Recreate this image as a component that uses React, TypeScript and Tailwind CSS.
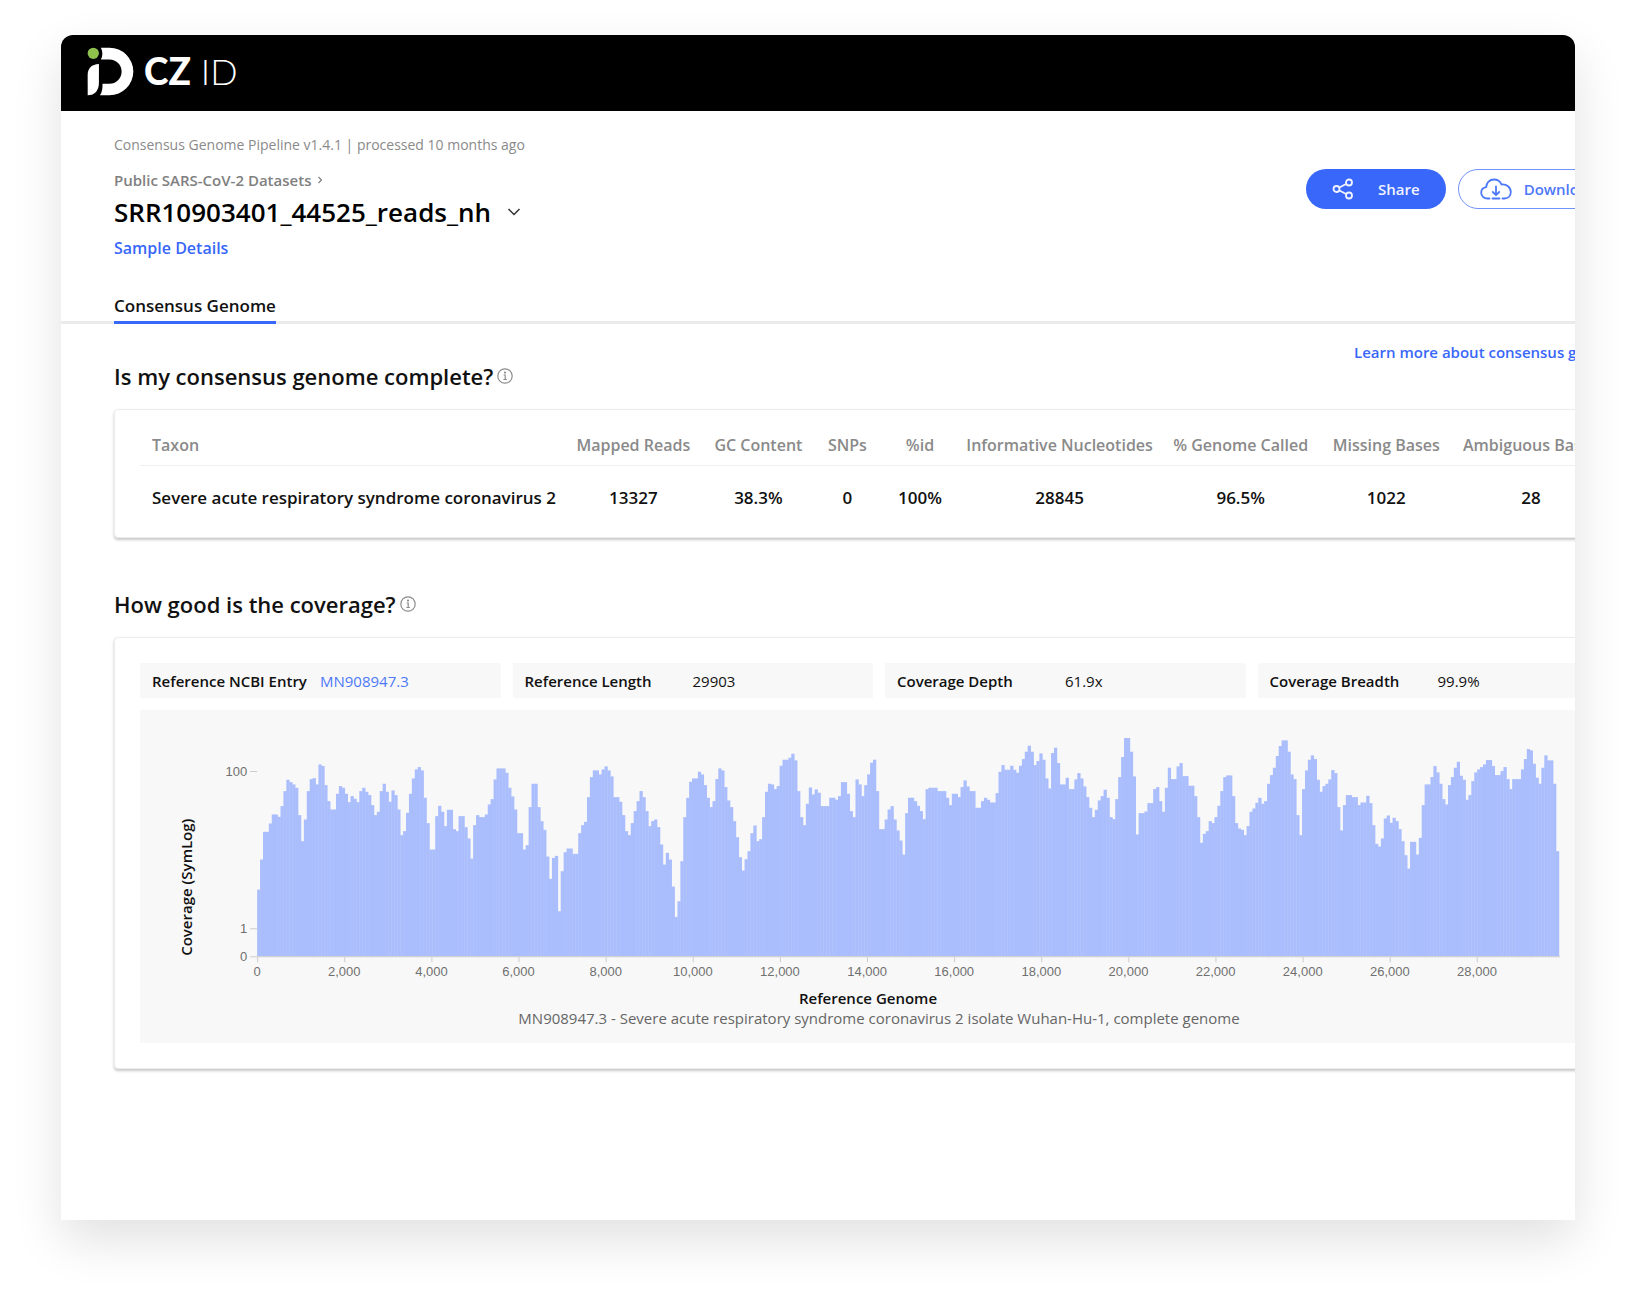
import React from "react";

type Step = [number, number];

const BASELINE = 765;

// Coverage profile, stored in stretches: [x where a level starts, y of that level].
const stretches: { origin: number; steps: Step[] }[] = [
  {
    origin: -264,
    steps: [
      [264, 565], [272, 475], [280, 392], [297, 380], [303, 367], [312, 340], [321, 347], [331, 335], [335, 315],
      [342, 270], [350, 236], [362, 243], [369, 250], [378, 260], [388, 342], [397, 420], [406, 355], [414, 270],
      [422, 234], [430, 231], [438, 250], [446, 210], [452, 190], [459, 195], [467, 252], [475, 300], [484, 325],
      [498, 278], [507, 255], [516, 260], [524, 278], [532, 303], [546, 285], [553, 293], [560, 303], [570, 270],
      [578, 260], [588, 272], [595, 282], [606, 312], [615, 342], [625, 332], [633, 270], [640, 248], [649, 272],
      [656, 302], [668, 268], [676, 282], [686, 325], [693, 402], [704, 390], [710, 335], [717, 278], [726, 232],
      [734, 205], [742, 198], [750, 208], [759, 248], [766, 290], [773, 366], [781, 445], [797, 345], [804, 314],
      [811, 332], [820, 360], [828, 375], [836, 326], [850, 384], [860, 390], [866, 345], [882, 378], [891, 412],
      [898, 472], [912, 372], [920, 342], [930, 348], [946, 340], [952, 310], [960, 294], [968, 278], [975, 235],
      [984, 202], [1006, 215], [1014, 260], [1022, 286], [1032, 325], [1038, 366], [1046, 396],
    ],
  },
  {
    origin: 786,
    steps: [
      [11, 445], [18, 432], [27, 318], [34, 248], [41, 226], [49, 248], [57, 318], [66, 360], [73, 386], [81, 466],
      [89, 533], [97, 470], [103, 464], [111, 515], [118, 630], [127, 510], [136, 453], [144, 442], [160, 458],
      [174, 396], [182, 372], [191, 362], [198, 348], [206, 288], [213, 228], [222, 208], [236, 220], [246, 205],
      [253, 196], [262, 208], [276, 226], [285, 288], [294, 302], [307, 342], [315, 390], [323, 402], [337, 366],
      [345, 330], [355, 300], [361, 270], [370, 288], [378, 330], [385, 375], [396, 360], [403, 355], [411, 378],
      [417, 430], [426, 490], [434, 468], [440, 455], [448, 475], [458, 556], [464, 647], [473, 600], [479, 480],
      [487, 408], [495, 348], [502, 290], [510, 242], [518, 232], [534, 212], [542, 220], [548, 240], [556, 252],
      [564, 290], [572, 318], [582, 300], [588, 234], [596, 202], [602, 208], [611, 258], [620, 298], [627, 318],
      [636, 340], [643, 360], [650, 408], [658, 468], [668, 508], [675, 474], [683, 450], [690, 396], [698, 373],
      [706, 384], [713, 420], [722, 414], [729, 348], [738, 272], [745, 248], [753, 250], [761, 264], [770, 255],
      [777, 240], [783, 194], [790, 176], [805, 170], [812, 158], [824, 178], [831, 270], [838, 348], [848, 372],
      [855, 308], [863, 259], [877, 280], [885, 265], [892, 275], [901, 315], [930, 290], [945, 296], [952, 285],
      [960, 262], [966, 243], [977, 278], [986, 330], [995, 348], [1003, 276], [1010, 235], [1018, 250],
      [1025, 285], [1034, 252], [1042, 220], [1049, 185],
    ],
  },
  {
    origin: 1836,
    steps: [
      [7, 176], [14, 194], [22, 270], [30, 384], [45, 355], [53, 325], [61, 315], [69, 355], [76, 388], [85, 398],
      [92, 418], [99, 460], [108, 336], [116, 290], [131, 300], [140, 314], [148, 330], [155, 354], [164, 300],
      [170, 264], [177, 260], [205, 270], [225, 290], [234, 312], [247, 278], [264, 288], [271, 258], [278, 238],
      [287, 256], [295, 270], [311, 290], [318, 320], [334, 300], [342, 290], [353, 296], [362, 304], [372, 300],
      [380, 276], [388, 212], [397, 192], [405, 206], [418, 194], [426, 206], [436, 215], [445, 194], [452, 174],
      [465, 152], [474, 134], [483, 152], [490, 192], [498, 180], [505, 157], [513, 176], [521, 232], [530, 262],
      [543, 156], [552, 140], [560, 186], [567, 250], [582, 230], [599, 264], [614, 235], [622, 216], [631, 232],
      [638, 256], [648, 288], [655, 320], [663, 348], [678, 326], [685, 298], [693, 285], [701, 266], [708, 290],
      [717, 348], [726, 354], [734, 294], [740, 228], [748, 168], [757, 144], [763, 111], [777, 152], [786, 226],
      [794, 296], [800, 400], [809, 336], [820, 331], [834, 306], [846, 290], [852, 264], [859, 258], [864, 300],
      [871, 332], [881, 260], [888, 200], [903, 234], [918, 196], [926, 186], [940, 225], [950, 254], [970, 264],
      [975, 285], [982, 348], [990, 425], [998, 398], [1008, 390], [1013, 360], [1022, 366], [1030, 348],
      [1043, 314],
    ],
  },
  {
    origin: 2886,
    steps: [
      [2, 270], [9, 228], [18, 223], [33, 285], [40, 366], [49, 382], [57, 376], [65, 386], [73, 402], [80, 375],
      [87, 332], [97, 322], [103, 305], [111, 290], [119, 308], [127, 300], [140, 248], [150, 222], [156, 200],
      [165, 165], [174, 135], [182, 118], [198, 152], [206, 190], [213, 220], [222, 234], [229, 342], [237, 402],
      [245, 264], [252, 208], [260, 176], [268, 163], [276, 174], [284, 200], [292, 236], [300, 272], [308, 255],
      [317, 248], [326, 235], [332, 207], [340, 216], [346, 256], [353, 318], [361, 388], [370, 312], [378, 282],
      [394, 288], [408, 312], [423, 304], [434, 292], [440, 284], [448, 306], [455, 372], [462, 428], [472, 436],
      [479, 412], [486, 352], [495, 343], [503, 365], [514, 350], [526, 360], [534, 384], [542, 420], [550, 462],
      [557, 502], [570, 422], [588, 460], [596, 410], [602, 312], [611, 250], [626, 228], [634, 195], [650, 214],
      [658, 248], [666, 294], [674, 310], [682, 252], [690, 228], [698, 200], [705, 182], [719, 224], [729, 236],
      [737, 296], [746, 282], [754, 240], [761, 214], [770, 205], [778, 198], [790, 190], [798, 177], [812, 195],
      [822, 222], [838, 210], [848, 198], [860, 234], [868, 264], [877, 234], [900, 205], [908, 174], [914, 144],
      [923, 139], [930, 148], [938, 188], [946, 230], [954, 248], [962, 200], [970, 163], [983, 178], [998, 248],
      [1008, 450],
    ],
  },
];

const profile: Step[] = stretches.flatMap(({ origin, steps }) =>
  steps.map(([x, y]): Step => [x + origin, BASELINE - y]),
);

const BAR_COUNT = 446;
const PLOT_UNITS = 3900;
const BAR = PLOT_UNITS / BAR_COUNT;

const bars = Array.from({ length: BAR_COUNT }, (_, i) => {
  const middle = (i + 0.5) * BAR;
  let height = profile[0][1];
  for (const [x, h] of profile) {
    if (x > middle) break;
    height = h;
  }
  return { x: i * BAR, height };
});

const columns: { name: string; value: string; width: string }[] = [
  { name: "Mapped Reads", value: "13327", width: "w-[136px]" },
  { name: "GC Content", value: "38.3%", width: "w-[114px]" },
  { name: "SNPs", value: "0", width: "w-[64px]" },
  { name: "%id", value: "100%", width: "w-[81px]" },
  { name: "Informative Nucleotides", value: "28845", width: "w-[198px]" },
  { name: "% Genome Called", value: "96.5%", width: "w-[164px]" },
  { name: "Missing Bases", value: "1022", width: "w-[127px]" },
  { name: "Ambiguous Bases", value: "28", width: "w-[168px] pr-1.5" },
];

function Logo() {
  return (
    <a href="#home" aria-label="CZ ID" className="flex items-center text-white">
      <svg viewBox="22 22 142 148" className="h-[49px] w-[47px]" aria-hidden="true">
        <circle cx="41" cy="41" r="17" fill="#8fc24d" />
        <path d="M24 168V106C24 86 36 74 58 73V130C58 153 46 168 24 168Z" fill="#fff" />
        <path
          d="M64 24H90A72 72 0 0 1 90 168H61C67 160 69 149 69 133H90A36.500 36.500 0 0 0 90 60H64C70 49 70 35 64 24Z"
          fill="#fff"
        />
      </svg>
      <span className="ml-2.5 font-['Lato',sans-serif] text-[37px] leading-10 font-black">CZ</span>
      <span className="ml-2.5 font-['Lato',sans-serif] text-[36px] leading-10 font-light">ID</span>
    </a>
  );
}

function ShareIcon() {
  return (
    <svg viewBox="0 0 22 22" className="size-[22px]" fill="none" stroke="currentColor" strokeWidth="1.8" aria-hidden="true">
      <circle cx="4.500" cy="11" r="3" />
      <circle cx="17" cy="4.500" r="3" />
      <circle cx="17" cy="17.500" r="3" />
      <path d="M7.400 9.500L14.100 6M7.400 12.500L14.100 16" />
    </svg>
  );
}

function CloudDownloadIcon() {
  return (
    <svg
      viewBox="0 0 32 22"
      className="h-[22px] w-8"
      fill="none"
      stroke="currentColor"
      strokeWidth="1.8"
      strokeLinecap="round"
      strokeLinejoin="round"
      aria-hidden="true"
    >
      <path d="M9.500 20.500H7.500C3.800 20.500 1.200 18 1.200 14.800C1.200 11.800 3.200 9.600 6.200 9.200C6.400 4.700 9.600 1.500 14 1.500C17.500 1.500 20.300 3.400 21.500 6.500C26.500 5.800 30.800 9.400 30.800 14C30.800 17.800 28.200 20.500 24.500 20.500H22.500" />
      <path d="M16 8.500V17M12.800 14L16 17.200L19.200 14M12.500 20.500H19.500" />
    </svg>
  );
}

function InfoIcon() {
  return (
    <svg viewBox="0 0 16 16" className="size-4 text-[#8c8c8c]" fill="none" stroke="currentColor" strokeWidth="1.2" aria-hidden="true">
      <circle cx="8" cy="8" r="7.200" />
      <path d="M6.600 7H8.200V11.500M6.400 11.500H9.900" />
      <circle cx="8" cy="4.600" r="0.500" fill="currentColor" />
    </svg>
  );
}

function SectionTitle({ children, id }: { children: React.ReactNode; id: string }) {
  return (
    <div className="flex items-center gap-1">
      <h2 id={id} className="text-[22px] leading-7 font-semibold">{children}</h2>
      <button type="button" aria-label="More information">
        <InfoIcon />
      </button>
    </div>
  );
}

function Stat({ label, children }: { label: string; children: React.ReactNode }) {
  return (
    <div className="flex h-[35px] items-center bg-[#f8f8f8] px-3 text-[15px] leading-5">
      <dt className="w-[168px] font-semibold">{label}</dt>
      <dd>{children}</dd>
    </div>
  );
}

function CoverageChart() {
  const ticks = Array.from({ length: 15 }, (_, i) => i * 2000);
  return (
    <svg viewBox="0 0 1476 278" className="block w-full" role="img" aria-label="Coverage of the reference genome">
      <g transform="translate(117 246) scale(0.33333)" fill="#aabdfc">
        {bars.map((bar) => (
          <rect key={bar.x} x={bar.x} y={-bar.height} width={BAR + 1} height={bar.height} />
        ))}
      </g>
      <g stroke="#cccccc">
        <path d="M117 246.500H1418M110 61.500H117M110 218.500H117M110 246.500H117" fill="none" />
        {ticks.map((t) => (
          <path key={t} d={`M${Math.round(117 + (t * 1301) / 29903) + 0.5} 247V252`} />
        ))}
      </g>
      <g className="font-['Liberation_Sans',sans-serif] text-[13px]" fill="#707070">
        <text x="107" y="66" textAnchor="end">100</text>
        <text x="107" y="223" textAnchor="end">1</text>
        <text x="107" y="251" textAnchor="end">0</text>
        {ticks.map((t) => (
          <text key={t} x={117 + (t * 1301) / 29903} y="266" textAnchor="middle">
            {t.toLocaleString("en-US")}
          </text>
        ))}
      </g>
      <text transform="translate(52 177) rotate(-90)" textAnchor="middle" className="text-[15px] font-semibold" fill="#111">
        Coverage (SymLog)
      </text>
    </svg>
  );
}

const card =
  "mt-[19px] rounded-[4px] border border-[#ececec] bg-white px-[25px] shadow-[0_2px_3px_rgba(0,0,0,0.22)]";

export default function App() {
  return (
    <div className="min-h-screen bg-white px-[61px] pt-[35px] pb-[87px] font-['Open_Sans',sans-serif] text-[#111]">
      <div className="overflow-hidden rounded-t-xl bg-white shadow-[0_20px_50px_rgba(0,0,0,0.12)]">
        <header className="flex h-[76px] items-center bg-black px-[26px] pb-1">
          <Logo />
        </header>

        <main>
          <div className="-mr-[69px] flex items-start justify-between pt-6 pl-[53px]">
            <div>
              <p className="text-[14px] leading-5 text-[#8a8a8a]">
                Consensus Genome Pipeline v1.4.1 | processed 10 months ago
              </p>
              <a href="#datasets" className="mt-[15px] flex items-center gap-1.5 text-[15px] leading-5 font-semibold text-[#808080]">
                Public SARS-CoV-2 Datasets
                <svg viewBox="0 0 6 8" className="h-2 w-1.5" fill="none" stroke="currentColor" strokeWidth="1.2" aria-hidden="true">
                  <path d="M1.500 1L4.500 4L1.500 7" />
                </svg>
              </a>
              <div className="mt-1 flex items-center gap-4">
                <h1 className="text-[26px] leading-9 font-semibold text-black">SRR10903401_44525_reads_nh</h1>
                <button type="button" aria-label="Switch sample">
                  <svg viewBox="0 0 14 10" className="h-2.5 w-3.5" fill="none" stroke="#333" strokeWidth="1.500" aria-hidden="true">
                    <path d="M1.500 2L7 7.500L12.500 2" />
                  </svg>
                </button>
              </div>
              <button type="button" className="mt-2 block text-[16px] leading-5 font-semibold text-[#3867fa]">
                Sample Details
              </button>
            </div>
            <div className="mt-[34px] flex gap-3 text-[15px] font-semibold">
              <button type="button" className="flex h-10 items-center gap-6 rounded-full bg-[#3867fa] px-[26px] text-[#f0f3ff]">
                <ShareIcon />
                Share
              </button>
              <button
                type="button"
                className="flex h-10 items-center gap-3 rounded-full border border-[#6f92fb] pr-[46px] pl-[21px] text-[#4e78fa]"
              >
                <CloudDownloadIcon />
                Download
              </button>
            </div>
          </div>

          <nav className="mt-9 flex border-b-[3px] border-[#ebebeb] pl-[53px]">
            <a
              href="#consensus"
              aria-current="page"
              className="-mb-[3px] border-b-[3px] border-[#3867fa] pb-[3px] text-[17px] leading-6 font-semibold"
            >
              Consensus Genome
            </a>
          </nav>

          <div className="-mr-[69px] pt-[18px] pb-[151px] pl-[53px]">
            <div className="flex justify-end pr-2.5 text-[15px] leading-5 font-semibold text-[#3867fa]">
              <a href="#learn">Learn more about consensus genomes</a>
            </div>

            <section aria-labelledby="complete">
              <SectionTitle id="complete">Is my consensus genome complete?</SectionTitle>
              <div className={`${card} pt-[19px] pb-2`}>
                <table className="w-full table-fixed text-center whitespace-nowrap">
                  <thead className="text-[16px] leading-5 text-[#8a8a8a]">
                    <tr className="h-9 border-b border-[#efefef]">
                      <th scope="col" className="w-[425px] pb-1 pl-3 text-left font-semibold">Taxon</th>
                      {columns.map((c) => (
                        <th key={c.name} scope="col" className={`${c.width} pb-1 font-semibold`}>{c.name}</th>
                      ))}
                    </tr>
                  </thead>
                  <tbody className="text-[17px] leading-6 font-semibold">
                    <tr className="h-16">
                      <td className="pt-0.5 pl-3 text-left">Severe acute respiratory syndrome coronavirus 2</td>
                      {columns.map((c) => (
                        <td key={c.name} className={`${c.width} pt-0.5`}>{c.value}</td>
                      ))}
                    </tr>
                  </tbody>
                </table>
              </div>
            </section>

            <section aria-labelledby="coverage" className="mt-[52px]">
              <SectionTitle id="coverage">How good is the coverage?</SectionTitle>
              <div className={`${card} py-[25px]`}>
                <dl className="grid grid-cols-4 gap-3">
                  <Stat label="Reference NCBI Entry">
                    <a href="#entry" className="text-[#4e78fa]">MN908947.3</a>
                  </Stat>
                  <Stat label="Reference Length">29903</Stat>
                  <Stat label="Coverage Depth">61.9x</Stat>
                  <Stat label="Coverage Breadth">99.9%</Stat>
                </dl>
                <figure className="mt-3 bg-[#f8f8f8] pb-[15px]">
                  <CoverageChart />
                  <figcaption className="text-center text-[15px] leading-5">
                    <p className="pr-[22px] font-semibold">Reference Genome</p>
                    <p className="text-[#666]">
                      MN908947.3 - Severe acute respiratory syndrome coronavirus 2 isolate Wuhan-Hu-1, complete genome
                    </p>
                  </figcaption>
                </figure>
              </div>
            </section>
          </div>
        </main>
      </div>
    </div>
  );
}
